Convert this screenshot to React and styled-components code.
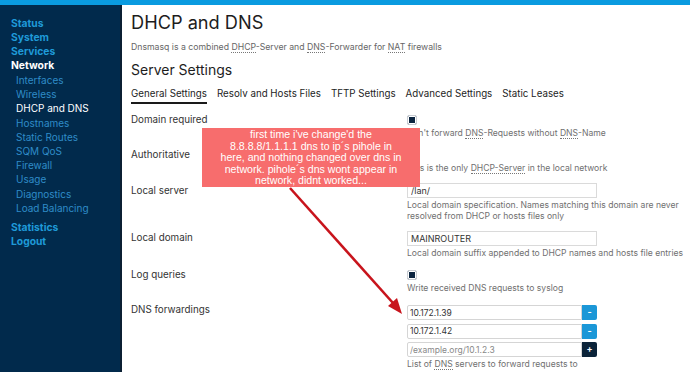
import styled, { createGlobalStyle } from "styled-components";

const GlobalStyle = createGlobalStyle`
  html, body {
    margin: 0;
    padding: 0;
    width: 690px;
    height: 372px;
    overflow: hidden;
    background: #ffffff;
  }
  * {
    box-sizing: border-box;
  }
`;

const menu = [
  { label: "Status" },
  { label: "System" },
  { label: "Services" },
  {
    label: "Network",
    active: true,
    children: [
      "Interfaces",
      "Wireless",
      "DHCP and DNS",
      "Hostnames",
      "Static Routes",
      "SQM QoS",
      "Firewall",
      "Usage",
      "Diagnostics",
      "Load Balancing",
    ],
  },
];

const tabs = [
  "General Settings",
  "Resolv and Hosts Files",
  "TFTP Settings",
  "Advanced Settings",
  "Static Leases",
];

function App() {
  return (
    <>
      <GlobalStyle />
      <Page>
        <TopBar />
        <Body>
          <Sidebar>
            {menu.map((item) => (
              <div key={item.label}>
                <TopLink $active={item.active}>{item.label}</TopLink>
                {item.children && (
                  <SubMenu>
                    {item.children.map((c) => (
                      <SubLink key={c} $active={c === "DHCP and DNS"}>
                        {c}
                      </SubLink>
                    ))}
                  </SubMenu>
                )}
              </div>
            ))}
            <BottomLinks>
              <TopLink>Statistics</TopLink>
              <TopLink>Logout</TopLink>
            </BottomLinks>
          </Sidebar>

          <Main>
            <Title>DHCP and DNS</Title>
            <Description>
              Dnsmasq is a combined <Abbr>DHCP</Abbr>-Server and <Abbr>DNS</Abbr>
              -Forwarder for <Abbr>NAT</Abbr> firewalls
            </Description>
            <SectionTitle>Server Settings</SectionTitle>
            <Tabs>
              {tabs.map((t, i) => (
                <Tab key={t} $active={i === 0}>
                  {t}
                </Tab>
              ))}
            </Tabs>

            <Form>
              <Row>
                <Label>Domain required</Label>
                <Value>
                  <Checkbox />
                  <Help>
                    Don't forward <Abbr>DNS</Abbr>-Requests without <Abbr>DNS</Abbr>-Name
                  </Help>
                </Value>
              </Row>
              <Row>
                <Label>Authoritative</Label>
                <Value>
                  <Checkbox />
                  <Help>
                    This is the only <Abbr>DHCP-Server</Abbr> in the local network
                  </Help>
                </Value>
              </Row>
              <Row>
                <Label $offset={1}>Local server</Label>
                <Value $flush>
                  <TextInput defaultValue="/lan/" />
                  <Help $tight>
                    Local domain specification. Names matching this domain are never
                    resolved from DHCP or hosts files only
                  </Help>
                </Value>
              </Row>
              <Row>
                <Label>Local domain</Label>
                <Value $flush>
                  <TextInput defaultValue="MAINROUTER" />
                  <Help $tight>Local domain suffix appended to DHCP names and hosts file entries</Help>
                </Value>
              </Row>
              <Row>
                <Label>Log queries</Label>
                <Value>
                  <Checkbox />
                  <Help>Write received DNS requests to syslog</Help>
                </Value>
              </Row>
              <Row>
                <Label>DNS forwardings</Label>
                <Value>
                  <DynList>
                    <DynRow>
                      <DynInput defaultValue="10.172.1.39" />
                      <DynButton>-</DynButton>
                    </DynRow>
                    <DynRow>
                      <DynInput defaultValue="10.172.1.42" />
                      <DynButton>-</DynButton>
                    </DynRow>
                    <DynRow>
                      <DynInput placeholder="/example.org/10.1.2.3" />
                      <DynButton $add>+</DynButton>
                    </DynRow>
                  </DynList>
                  <Help $tight>
                    List of <Abbr>DNS</Abbr> servers to forward requests to
                  </Help>
                </Value>
              </Row>
            </Form>

            <Note>
              first time i've change'd the
              <br />
              8.8.8.8/1.1.1.1 dns to ip´s pihole in
              <br />
              here, and nothing changed over dns in
              <br />
              network. pihole´s dns wont appear in
              <br />
              network, didnt worked...
            </Note>
            <Arrow width="690" height="372" viewBox="0 0 690 372">
              <line x1="290" y1="188" x2="393" y2="303" stroke="#c8141c" strokeWidth="2.6" />
              <polygon points="402,314 388,306 397,298" fill="#c8141c" />
            </Arrow>
          </Main>
        </Body>
      </Page>
    </>
  );
}

export default App;

const Page = styled.div`
  width: 690px;
  height: 372px;
  display: flex;
  flex-direction: column;
  font-family: Inter, "Open Sans", sans-serif;
  color: #222;
`;

const TopBar = styled.div`
  height: 5px;
  flex: 0 0 5px;
  background: #0a9be0;
`;

const Body = styled.div`
  flex: 1;
  display: flex;
  min-height: 0;
`;

const Sidebar = styled.div`
  width: 122px;
  flex: 0 0 122px;
  background: #012a4c;
  border-right: 2px solid #0b1f33;
  padding: 11px 0 0 11px;
`;

const TopLink = styled.div`
  font-size: 10.3px;
  line-height: 14px;
  font-weight: 700;
  color: ${(p) => (p.$active ? "#ffffff" : "#1f9ad8")};
`;

const SubMenu = styled.div`
  padding: 1px 0 0 5px;
`;

const SubLink = styled.div`
  font-size: 10px;
  line-height: 14.2px;
  color: ${(p) => (p.$active ? "#ffffff" : "#2f8cc8")};
`;

const BottomLinks = styled.div`
  margin-top: 5px;
`;

const Main = styled.div`
  flex: 1;
  position: relative;
  padding: 6px 0 0 9px;
`;

const Title = styled.div`
  font-size: 18.2px;
  line-height: 22px;
  color: #1d1d1d;
`;

const Description = styled.div`
  margin-top: 8px;
  font-size: 8.7px;
  line-height: 12px;
  color: #666;
`;

const Abbr = styled.span`
  border-bottom: 1px dotted #777;
`;

const SectionTitle = styled.div`
  margin-top: 7px;
  font-size: 14px;
  line-height: 20px;
  color: #1d1d1d;
`;

const Tabs = styled.div`
  margin-top: 7px;
  display: flex;
  gap: 10px;
`;

const Tab = styled.div`
  font-size: 9.75px;
  line-height: 14px;
  padding-bottom: 1px;
  color: #1d1d1d;
  border-bottom: 2px solid ${(p) => (p.$active ? "#1a1a1a" : "transparent")};
`;

const Form = styled.div`
  margin-top: 9px;
  display: flex;
  flex-direction: column;
`;

const Row = styled.div`
  display: flex;
  margin-bottom: 9px;
`;

const Label = styled.div`
  flex: 0 0 276px;
  font-size: 9.8px;
  line-height: 13px;
  color: #333;
  padding-top: ${(p) => p.$offset || 0}px;
`;

const Value = styled.div`
  display: flex;
  flex-direction: column;
  align-items: flex-start;
  padding-top: ${(p) => (p.$flush ? 0 : 2)}px;
`;

const Checkbox = styled.div`
  width: 10px;
  height: 10px;
  border: 1px solid #c8ccd2;
  border-radius: 2px;
  background: #0c2540;
  box-shadow: inset 0 0 0 1px #ffffff;
`;

const Help = styled.div`
  margin-top: ${(p) => (p.$tight ? 2 : 3)}px;
  font-size: 8.6px;
  line-height: 11px;
  color: #707070;
  max-width: 290px;
`;

const TextInput = styled.input`
  width: 190px;
  height: 15px;
  border: 1px solid #dadada;
  padding: 0 3px;
  font-family: inherit;
  font-size: 9px;
  color: #333;
  outline: none;
`;

const DynList = styled.div`
  display: flex;
  flex-direction: column;
  gap: 3.5px;
`;

const DynRow = styled.div`
  display: flex;
`;

const DynInput = styled.input`
  width: 175px;
  height: 15px;
  border: 1px solid #d5d5d5;
  border-radius: 2px 0 0 2px;
  padding: 0 2px;
  font-family: inherit;
  font-size: 8.5px;
  color: #333;
  outline: none;
  &::placeholder {
    color: #888;
  }
`;

const DynButton = styled.div`
  width: 15px;
  height: 15px;
  border-radius: 0 2px 2px 0;
  background: ${(p) => (p.$add ? "#0b2339" : "#1b97d7")};
  color: #fff;
  font-size: 9px;
  line-height: 14px;
  text-align: center;
  font-weight: 700;
`;

const Note = styled.div`
  position: absolute;
  left: 80px;
  top: 123px;
  width: 218px;
  height: 59px;
  padding-top: 1px;
  background: #f76d6d;
  color: #ffffff;
  font-family: "Liberation Sans", Arial, sans-serif;
  font-size: 10.6px;
  line-height: 11.6px;
  text-align: center;
`;

const Arrow = styled.svg`
  position: absolute;
  left: -122px;
  top: -5px;
  pointer-events: none;
`;
